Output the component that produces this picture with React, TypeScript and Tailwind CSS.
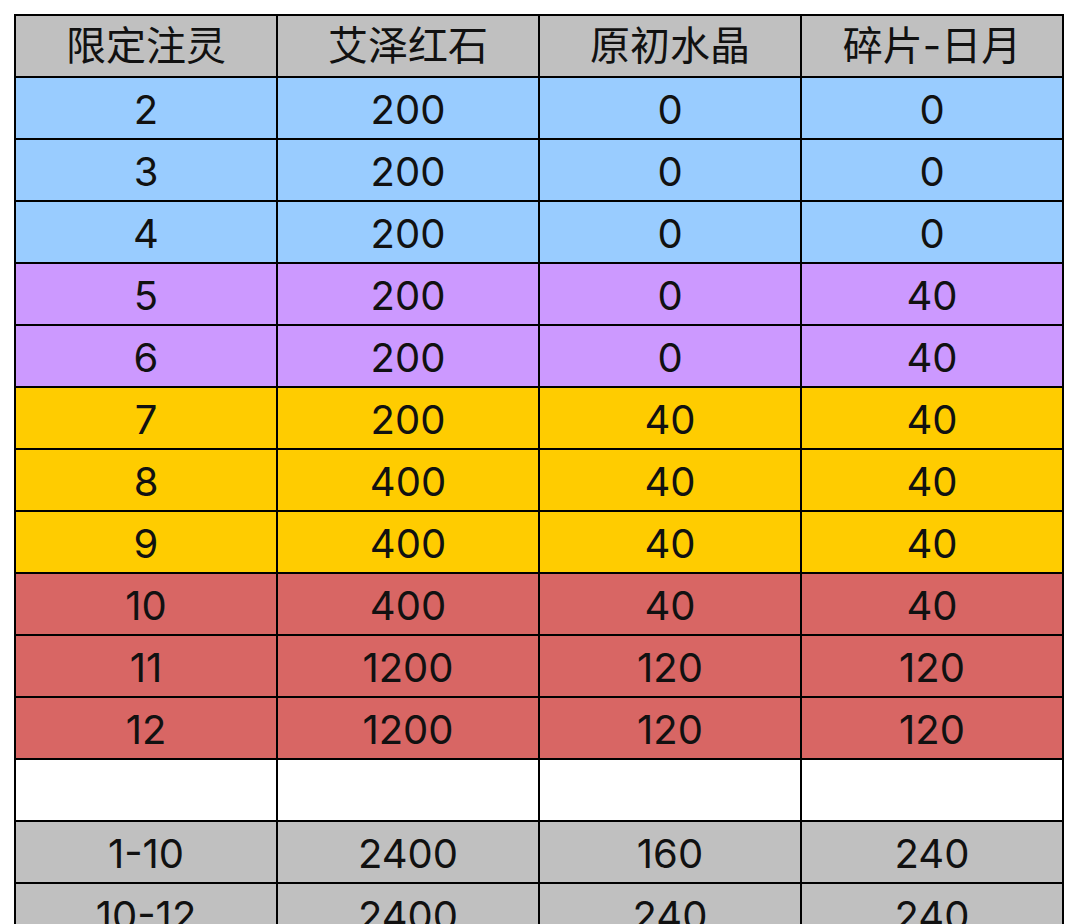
const header = ["限定注灵", "艾泽红石", "原初水晶", "碎片-日月"];

type Row = { cells: string[]; bg: string };

const rows: Row[] = [
  { cells: ["2", "200", "0", "0"], bg: "bg-[#99ccff]" },
  { cells: ["3", "200", "0", "0"], bg: "bg-[#99ccff]" },
  { cells: ["4", "200", "0", "0"], bg: "bg-[#99ccff]" },
  { cells: ["5", "200", "0", "40"], bg: "bg-[#cc99ff]" },
  { cells: ["6", "200", "0", "40"], bg: "bg-[#cc99ff]" },
  { cells: ["7", "200", "40", "40"], bg: "bg-[#ffcc00]" },
  { cells: ["8", "400", "40", "40"], bg: "bg-[#ffcc00]" },
  { cells: ["9", "400", "40", "40"], bg: "bg-[#ffcc00]" },
  { cells: ["10", "400", "40", "40"], bg: "bg-[#d86664]" },
  { cells: ["11", "1200", "120", "120"], bg: "bg-[#d86664]" },
  { cells: ["12", "1200", "120", "120"], bg: "bg-[#d86664]" },
  { cells: ["", "", "", ""], bg: "bg-white" },
  { cells: ["1-10", "2400", "160", "240"], bg: "bg-[#c0c0c0]" },
  { cells: ["10-12", "2400", "240", "240"], bg: "bg-[#c0c0c0]" },
];

function Cell({ text, bg }: { text: string; bg: string }) {
  return (
    <div className={`${bg} flex items-center justify-center pt-[3px] leading-none`}>
      {text}
    </div>
  );
}

export default function App() {
  return (
    <div className="min-h-screen bg-white pl-[14px] pt-[14px] text-[40px] text-[#111] [font-family:Inter,'Noto_Sans_CJK_SC',sans-serif]">
      <div className="grid w-fit grid-cols-[repeat(4,260px)] auto-rows-[60px] gap-[2px] bg-black p-[2px]">
        {header.map((h) => (
          <div key={h} className="flex items-center justify-center bg-[#c0c0c0] leading-none">
            {h}
          </div>
        ))}
        {rows.map((row, i) =>
          row.cells.map((c, j) => <Cell key={`${i}-${j}`} text={c} bg={row.bg} />)
        )}
      </div>
    </div>
  );
}
